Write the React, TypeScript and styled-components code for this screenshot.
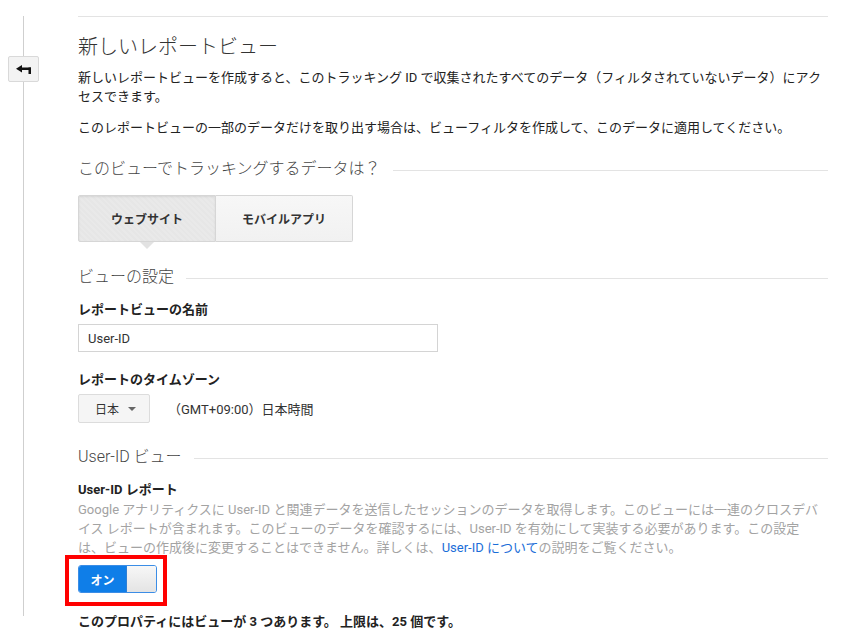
import React from "react";
import styled, { createGlobalStyle } from "styled-components";

const Global = createGlobalStyle`
  html, body { margin: 0; padding: 0; background: #fff; }
  body {
    font-family: Roboto, "Noto Sans CJK JP", "Noto Sans", sans-serif;
    color: #222;
    font-size: 13px;
    -webkit-font-smoothing: antialiased;
  }
  * { box-sizing: border-box; }
`;

const Page = styled.div`
  display: flex;
  align-items: flex-start;
  width: 842px;
  height: 640px;
  overflow: hidden;
`;

const Rail = styled.div`
  width: 46px;
  flex: none;
  display: flex;
  flex-direction: column;
  align-items: center;
  padding-top: 16px;
`;

const RailLine = styled.div<{ $h: number }>`
  width: 1px;
  height: ${(p) => p.$h}px;
  background: #cfcfcf;
`;

const BackButton = styled.button`
  width: 31px;
  height: 26px;
  padding: 0;
  display: flex;
  align-items: center;
  justify-content: center;
  background: #f3f3f3;
  border: 1px solid #d9d9d9;
  border-radius: 2px;
  cursor: pointer;
`;

const Main = styled.div`
  width: 750px;
  margin-left: 32px;
  margin-top: 16px;
  border-top: 1px solid #e3e3e3;
`;

const Title = styled.h1`
  margin: 16px 0 0;
  font-size: 20px;
  line-height: 28px;
  font-weight: 300;
  color: #333;
`;

const Para = styled.p<{ $mt: number }>`
  margin: ${(p) => p.$mt}px 0 0;
  font-size: 13px;
  line-height: 19px;
  color: #222;
`;

const SectionHead = styled.div<{ $mt: number }>`
  margin-top: ${(p) => p.$mt}px;
  display: flex;
  align-items: center;
  gap: 12px;
  font-size: 16px;
  line-height: 22px;
  font-weight: 300;
  color: #444;
  &::after {
    content: "";
    flex: 1;
    height: 1px;
    background: #e3e3e3;
    margin-top: 2px;
  }
`;

const Tabs = styled.div`
  margin-top: 15px;
  display: flex;
`;

const Tab = styled.button<{ $active?: boolean }>`
  position: relative;
  width: ${(p) => (p.$active ? 138 : 137)}px;
  height: 47px;
  padding: 0;
  font-family: inherit;
  font-size: 12px;
  font-weight: 700;
  color: #333;
  border: 1px solid #d6d6d6;
  border-left-width: ${(p) => (p.$active ? 1 : 0)}px;
  border-radius: ${(p) => (p.$active ? "2px 0 0 2px" : "0 2px 2px 0")};
  background: ${(p) =>
    p.$active
      ? "repeating-linear-gradient(45deg, #e6e6e6 0 2px, #e9e9e9 2px 4px)"
      : "linear-gradient(#f7f7f7, #f1f1f1)"};
  box-shadow: ${(p) => (p.$active ? "inset 0 1px 2px rgba(0,0,0,0.08)" : "none")};
  cursor: pointer;
  ${(p) =>
    p.$active &&
    `
    &::after {
      content: "";
      position: absolute;
      left: 50%;
      bottom: -8px;
      margin-left: -7px;
      border-left: 7px solid transparent;
      border-right: 7px solid transparent;
      border-top: 7px solid #e2e2e2;
    }
  `}
`;

const FieldLabel = styled.div<{ $mt: number }>`
  margin-top: ${(p) => p.$mt}px;
  font-size: 13px;
  line-height: 20px;
  font-weight: 700;
  color: #222;
`;

const TextInput = styled.input`
  display: block;
  margin-top: 4px;
  width: 360px;
  height: 28px;
  padding: 0 9px;
  font-family: inherit;
  font-size: 13px;
  color: #333;
  border: 1px solid #d4d4d4;
  border-radius: 0;
  outline: none;
`;

const ZoneRow = styled.div`
  margin-top: 4px;
  display: flex;
  align-items: center;
  gap: 18px;
`;

const Dropdown = styled.button`
  width: 72px;
  height: 29px;
  padding: 0 0 0 16px;
  display: flex;
  align-items: center;
  gap: 9px;
  font-family: inherit;
  font-size: 12px;
  color: #333;
  background: #f5f5f5;
  border: 1px solid #dcdcdc;
  border-radius: 2px;
  cursor: pointer;
`;

const Caret = styled.span`
  width: 0;
  height: 0;
  border-left: 4px solid transparent;
  border-right: 4px solid transparent;
  border-top: 4px solid #666;
  margin-top: 1px;
`;

const ZoneText = styled.span`
  font-size: 13px;
  color: #333;
`;

const Desc = styled.p`
  margin: 0;
  width: 744px;
  font-size: 13px;
  line-height: 19px;
  color: #a3a3a3;
`;

const Link = styled.a`
  color: #1a6dd8;
  text-decoration: none;
`;

const ToggleWrap = styled.div`
  position: relative;
  margin-top: 8px;
  width: 79px;
  height: 28px;
`;

const Highlight = styled.div`
  position: absolute;
  left: -13px;
  top: -10px;
  width: 102px;
  height: 51px;
  border: 4px solid #f00;
  pointer-events: none;
`;

const Toggle = styled.div`
  display: flex;
  width: 79px;
  height: 28px;
  border: 1px solid #3b8de6;
  border-radius: 3px;
  overflow: hidden;
`;

const ToggleOn = styled.div`
  width: 48px;
  display: flex;
  align-items: center;
  justify-content: center;
  background: #0f7ee8;
  color: #fff;
  font-size: 12px;
  font-weight: 700;
  border-right: 1px solid #2f7fd4;
`;

const ToggleKnob = styled.div`
  flex: 1;
  background: linear-gradient(#f7f7f7, #e4e4e4);
`;

const Footer = styled.div`
  margin-top: 19px;
  font-size: 13px;
  line-height: 20px;
  font-weight: 700;
  color: #222;
`;

const BackIcon = () => (
  <svg width="15" height="9" viewBox="0 0 15 9" aria-hidden>
    <path d="M0 3.75 L6 0 L6 7.5 Z" fill="#111" />
    <rect x="5" y="2.5" width="10" height="2.5" fill="#111" />
    <rect x="12.5" y="2.5" width="2.5" height="6.5" fill="#111" />
  </svg>
);

export default function App() {
  return (
    <>
      <Global />
      <Page>
        <Rail>
          <RailLine $h={40} />
          <BackButton aria-label="戻る">
            <BackIcon />
          </BackButton>
          <RailLine $h={534} />
        </Rail>
        <Main>
          <Title>新しいレポートビュー</Title>
          <Para $mt={7}>
            新しいレポートビューを作成すると、このトラッキング ID で収集されたすべてのデータ（フィルタされていないデータ）にアクセスできます。
          </Para>
          <Para $mt={12}>
            このレポートビューの一部のデータだけを取り出す場合は、ビューフィルタを作成して、このデータに適用してください。
          </Para>
          <SectionHead $mt={21}>このビューでトラッキングするデータは？</SectionHead>
          <Tabs>
            <Tab $active>ウェブサイト</Tab>
            <Tab>モバイルアプリ</Tab>
          </Tabs>
          <SectionHead $mt={24}>ビューの設定</SectionHead>
          <FieldLabel $mt={12}>レポートビューの名前</FieldLabel>
          <TextInput defaultValue="User-ID" />
          <FieldLabel $mt={18}>レポートのタイムゾーン</FieldLabel>
          <ZoneRow>
            <Dropdown>
              日本
              <Caret />
            </Dropdown>
            <ZoneText>（GMT+09:00）日本時間</ZoneText>
          </ZoneRow>
          <SectionHead $mt={23}>User-ID ビュー</SectionHead>
          <FieldLabel $mt={12}>User-ID レポート</FieldLabel>
          <Desc>
            Google アナリティクスに User-ID と関連データを送信したセッションのデータを取得します。このビューには一連のクロスデバイス レポートが含まれます。このビューのデータを確認するには、User-ID を有効にして実装する必要があります。この設定は、ビューの作成後に変更することはできません。詳しくは、
            <Link href="#">User-ID について</Link>の説明をご覧ください。
          </Desc>
          <ToggleWrap>
            <Toggle>
              <ToggleOn>オン</ToggleOn>
              <ToggleKnob />
            </Toggle>
            <Highlight />
          </ToggleWrap>
          <Footer>このプロパティにはビューが 3 つあります。 上限は、25 個です。</Footer>
        </Main>
      </Page>
    </>
  );
}
